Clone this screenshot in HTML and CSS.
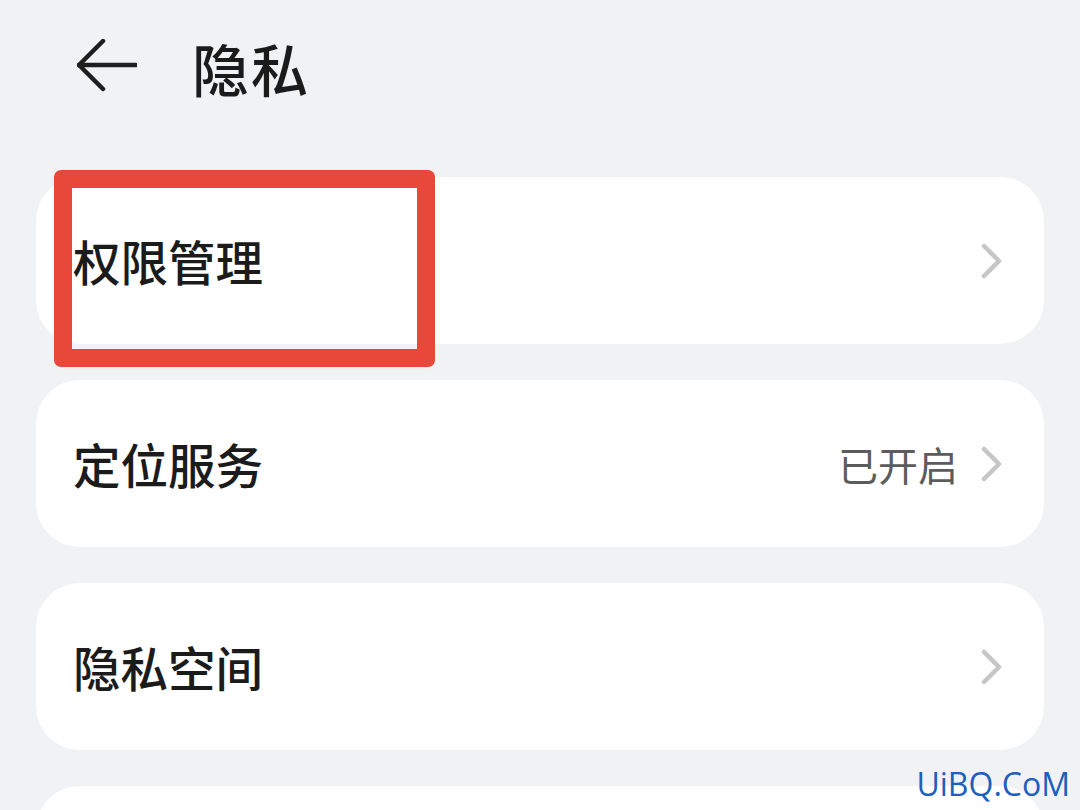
FILE: index.html
```html
<!DOCTYPE html>
<html lang="zh-CN">
  <head>
    <meta charset="utf-8">
    <title>隐私</title>
    <link rel="stylesheet" href="styles.css">
  </head>
  <body>
    <header class="topbar">
      <svg class="back" width="60" height="56" viewBox="0 0 60 56">
        <polyline points="26,2 2,26 26,50" />
        <line x1="2" y1="26" x2="59" y2="26" />
      </svg>
      <h1 class="title">隐私</h1>
    </header>

    <main class="list">
      <div class="card">
        <span class="label">权限管理</span>
        <span class="right">
          <svg class="chev" width="24" height="36" viewBox="0 0 24 36"><polyline points="4,3 19,18 4,33" /></svg>
        </span>
      </div>
      <div class="card">
        <span class="label">定位服务</span>
        <span class="right">
          <span class="state">已开启</span>
          <svg class="chev" width="24" height="36" viewBox="0 0 24 36"><polyline points="4,3 19,18 4,33" /></svg>
        </span>
      </div>
      <div class="card">
        <span class="label">隐私空间</span>
        <span class="right">
          <svg class="chev" width="24" height="36" viewBox="0 0 24 36"><polyline points="4,3 19,18 4,33" /></svg>
        </span>
      </div>
      <div class="card"></div>
    </main>

    <!-- annotation drawn over the screenshot -->
    <div class="mark"></div>
    <div class="watermark">UiBQ.CoM</div>
  </body>
</html>
```

FILE: styles.css
```css
html, body {
  margin: 0;
  height: 810px;
  overflow: hidden;
}
body {
  background-color: #f1f2f4;
  font-family: "Noto Sans CJK SC", "Noto Sans", sans-serif;
  color: #1b1b1b;
  position: relative;
}
.topbar {
  display: flex;
  align-items: center;
  height: 140px;
  padding-left: 77px;
}
.back {
  fill: none;
  stroke: #1e1e1e;
  stroke-width: 4.5;
  stroke-linecap: round;
  stroke-linejoin: round;
  margin-top: -6px;
}
.title {
  margin: -6px 0 0 55px;
  font-size: 57px;
  font-weight: 500;
  letter-spacing: 2px;
}
.list {
  display: flex;
  flex-direction: column;
  gap: 36px;
  margin-top: 37px;
  padding: 0 36px;
}
.card {
  background-color: #fff;
  border-radius: 44px;
  height: 167px;
  padding: 0 40px 0 37px;
  display: flex;
  align-items: center;
  justify-content: space-between;
  flex-shrink: 0;
}
.label {
  font-size: 47.5px;
  font-weight: 500;
}
.right {
  display: flex;
  align-items: center;
  gap: 22px;
}
.state {
  font-size: 40px;
  color: #5c5c5c;
}
.chev {
  fill: none;
  stroke: #c6c6c6;
  stroke-width: 4.5;
  stroke-linecap: round;
  stroke-linejoin: round;
}
.mark {
  position: absolute;
  left: 54px;
  top: 170px;
  width: 345px;
  height: 161px;
  border: 18px solid #e8483a;
  border-radius: 7px;
}
.watermark {
  position: absolute;
  right: 10px;
  top: 762px;
  font-family: "Open Sans", sans-serif;
  font-size: 32px;
  color: #1b5fc0;
}
```
